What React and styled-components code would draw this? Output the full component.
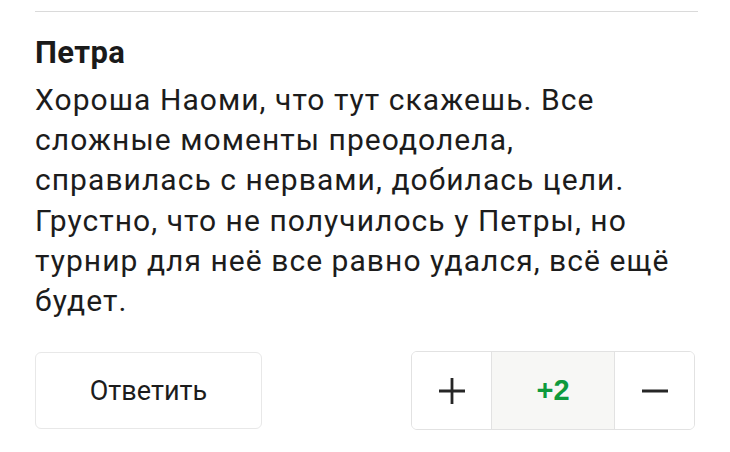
import React from "react";
import styled, { createGlobalStyle } from "styled-components";

const Global = createGlobalStyle`
  body {
    margin: 0;
    background: #ffffff;
    font-family: Roboto, "Noto Sans", sans-serif;
    color: #1c1c1c;
  }
`;

const Comment = styled.div`
  width: 663px;
  margin-left: 35px;
  padding-top: 11px;
`;

const Divider = styled.div`
  height: 1px;
  background: #dadada;
`;

const Author = styled.div`
  margin-top: 23px;
  font-size: 31px;
  font-weight: 700;
  letter-spacing: 0.4px;
  line-height: 36px;
  color: #1a1a1a;
`;

const Body = styled.p`
  margin: 9px 0 0;
  font-size: 30px;
  letter-spacing: 1.05px;
  line-height: 40.2px;
  white-space: nowrap;
  color: #1c1c1c;
`;

const Actions = styled.div`
  display: flex;
  justify-content: space-between;
  align-items: center;
  margin-top: 30px;
  padding-right: 3px;
`;

const ReplyButton = styled.button`
  width: 227px;
  height: 77px;
  border: 1px solid #e8e8e8;
  border-radius: 6px;
  background: #fff;
  font-family: Roboto, sans-serif;
  font-size: 27px;
  color: #1c1c1c;
  padding: 0;
`;

const Votes = styled.div`
  display: flex;
  height: 77px;
  border: 1px solid #e2e2e2;
  border-radius: 6px;
  overflow: hidden;
`;

const VoteButton = styled.button`
  width: 79px;
  border: none;
  background: #fff;
  display: flex;
  align-items: center;
  justify-content: center;
  padding: 0;
`;

const Score = styled.div`
  width: 122px;
  border-left: 1px solid #e2e2e2;
  border-right: 1px solid #e2e2e2;
  background: #f7f7f5;
  display: flex;
  align-items: center;
  justify-content: center;
  font-family: "Liberation Sans", Arial, sans-serif;
  font-weight: 700;
  font-size: 29px;
  color: #0e9a3c;
`;

const Icon = ({ plus }) => (
  <svg width="26" height="26" viewBox="0 0 26 26">
    <path d="M0 13H26" stroke="#262626" strokeWidth="2.8" />
    {plus && <path d="M13 0V26" stroke="#262626" strokeWidth="2.8" />}
  </svg>
);

const lines = [
  "Хороша Наоми, что тут скажешь. Все",
  "сложные моменты преодолела,",
  "справилась с нервами, добилась цели.",
  "Грустно, что не получилось у Петры, но",
  "турнир для неё все равно удался, всё ещё",
  "будет.",
];

export default function App() {
  return (
    <>
      <Global />
      <Comment>
        <Divider />
        <Author>Петра</Author>
        <Body>
          {lines.map((line, i) => (
            <React.Fragment key={i}>
              {line}
              {i < lines.length - 1 && <br />}
            </React.Fragment>
          ))}
        </Body>
        <Actions>
          <ReplyButton>Ответить</ReplyButton>
          <Votes>
            <VoteButton>
              <Icon plus />
            </VoteButton>
            <Score>+2</Score>
            <VoteButton>
              <Icon />
            </VoteButton>
          </Votes>
        </Actions>
      </Comment>
    </>
  );
}
